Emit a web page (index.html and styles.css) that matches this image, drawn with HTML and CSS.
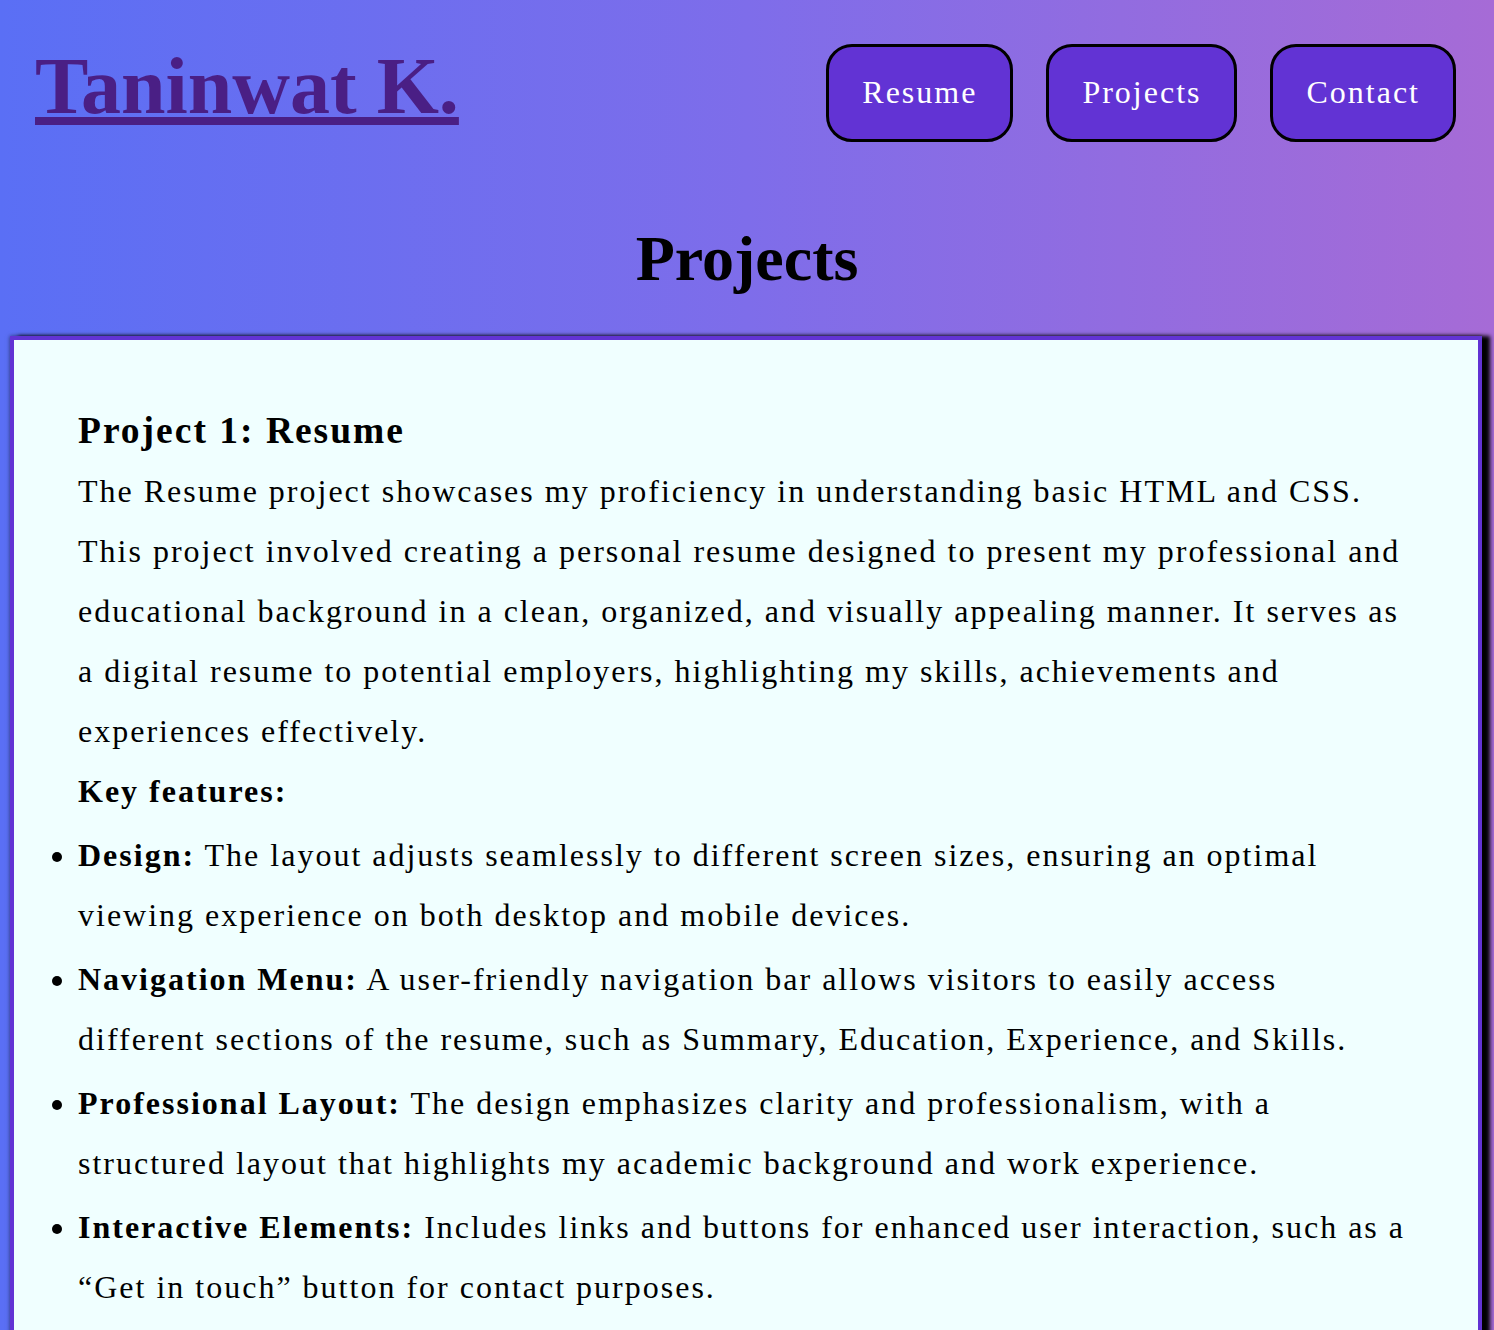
FILE: index.html
```html
<!DOCTYPE html>
<html lang="en">
<head>
<meta charset="utf-8">
<title>Taninwat K. - Projects</title>
<link rel="stylesheet" href="styles.css">
</head>
<body>
<header class="site-header">
  <a class="brand" href="#">Taninwat K.</a>
  <nav class="nav">
    <a class="nav-btn" href="#">Resume</a>
    <a class="nav-btn" href="#">Projects</a>
    <a class="nav-btn" href="#">Contact</a>
  </nav>
</header>
<h2 class="page-title">Projects</h2>
<main class="card">
  <h3 class="project-title">Project 1: Resume</h3>
  <p class="text">The Resume project showcases my proficiency in understanding basic HTML and CSS. This project involved creating a personal resume designed to present my professional and educational background in a clean, organized, and visually appealing manner. It serves as a digital resume to potential employers, highlighting my skills, achievements and experiences effectively.</p>
  <p class="text key">Key features:</p>
  <ul class="features">
    <li><strong>Design:</strong> The layout adjusts seamlessly to different screen sizes, ensuring an optimal viewing experience on both desktop and mobile devices.</li>
    <li><strong>Navigation Menu:</strong> A user-friendly navigation bar allows visitors to easily access different sections of the resume, such as Summary, Education, Experience, and Skills.</li>
    <li><strong>Professional Layout:</strong> The design emphasizes clarity and professionalism, with a structured layout that highlights my academic background and work experience.</li>
    <li><strong>Interactive Elements:</strong> Includes links and buttons for enhanced user interaction, such as a “Get in touch” button for contact purposes.</li>
  </ul>
</main>
</body>
</html>
```

FILE: styles.css
```css
html {
  background: linear-gradient(to right, #5a6ff5, #7e6dea 50%, #a66bd6);
  min-height: 100%;
}

body {
  margin: 0;
  min-height: 100vh;
  font-family: "Liberation Serif", "Times New Roman", serif;
  color: #000;
}

.site-header {
  display: flex;
  justify-content: space-between;
  align-items: flex-start;
  padding: 40px 38px 0 35px;
}

.brand {
  font-size: 80px;
  font-weight: bold;
  line-height: 92px;
  color: #4a1f85;
  text-decoration: underline;
}

.nav {
  display: flex;
  gap: 33px;
  margin-top: 4px;
}

.nav-btn {
  display: block;
  background: #6233d4;
  color: #fff;
  border: 3px solid #000;
  border-radius: 26px;
  padding: 27px 33px 29px;
  font-size: 32px;
  line-height: 36px;
  letter-spacing: 2px;
  text-decoration: none;
}

.page-title {
  text-align: center;
  font-size: 64px;
  line-height: 74px;
  font-weight: bold;
  margin: 80px 0 40px;
}

.card {
  display: block;
  margin: 0 12px 0 10px;
  background: #f0ffff;
  border: 4px solid #6233d4;
  box-shadow: 8px 0 4px #000, 0 0 4px rgba(0, 0, 0, 0.55);
  padding: 69px 68px 64px 64px;
  font-size: 32px;
  line-height: 60px;
  letter-spacing: 2px;
}

.project-title {
  font-size: 37.5px;
  line-height: 43px;
  margin: 0 0 9px;
  letter-spacing: 2px;
}

.text {
  margin: 0;
}

.key {
  font-weight: bold;
}

.features {
  margin: 0;
  padding: 0;
  list-style: disc outside;
}

.features li {
  margin-top: 4px;
}
```
